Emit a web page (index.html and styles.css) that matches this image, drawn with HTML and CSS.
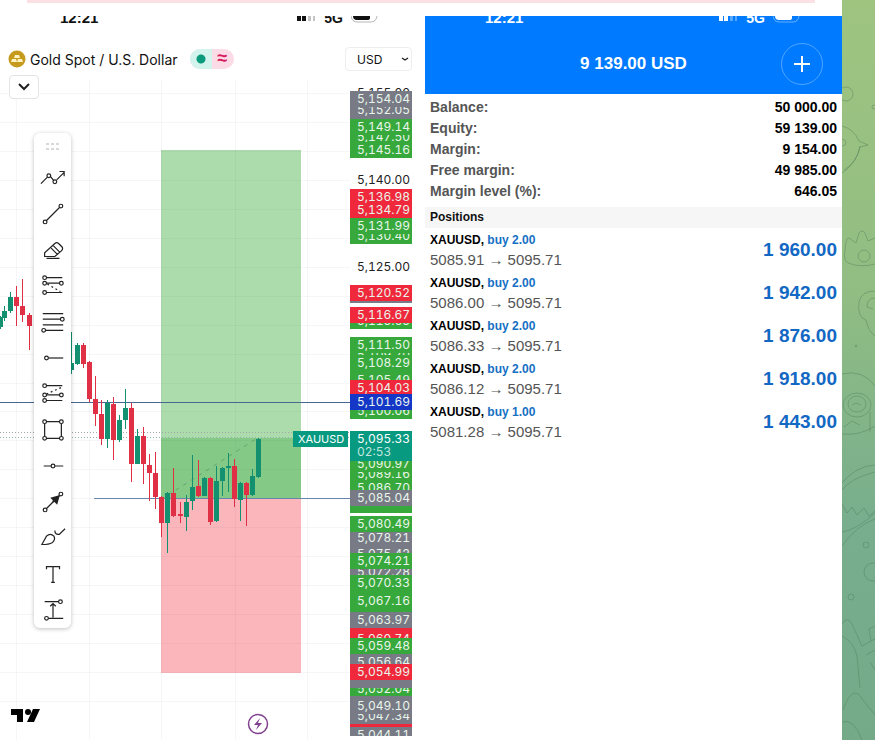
FILE: index.html
```html
<!DOCTYPE html>
<html lang="en">
<head>
    <meta charset="UTF-8">
    <meta name="viewport" content="width=device-width, initial-scale=1.0">
    <title>Gold Spot / U.S. Dollar</title>
    <link rel="stylesheet" href="styles.css">
</head>
<body>
    <div class="page">
        <main class="message">
            <div class="strip"></div>
            <div class="shots">
                <section class="chart">
                    <svg class="plot" id="plot" viewBox="0 16 425 724" preserveAspectRatio="xMinYMin meet"></svg>
                    <div class="status">
                        <span class="time">12:21</span>
                        <svg class="signal" width="22" height="8" viewBox="0 0 22 8"><path d="M1 0h4v5H1zM6 0h4v5H6z" fill="currentColor"/><path d="M12 0h3v5h-3zM17 0h2v5h-2z" fill="currentColor" opacity=".25"/></svg>
                        <span class="network">5G</span>
                        <svg class="battery" width="28" height="8" viewBox="0 0 28 8"><path d="M2 0h17v2q0 2-3 2H6Q2 4 2 0z" fill="currentColor"/><path d="M0 0q1 6 6 6h14q5 0 6-6" fill="none" stroke="currentColor" opacity=".3"/></svg>
                    </div>
                    <header class="symbol">
                        <svg class="gold" width="18" height="18" viewBox="0 0 18 18"><circle cx="9" cy="9" r="8.5" fill="#c59a1d"/><path d="M7 5h4l1 3H6zM4 9h4l1 3H3zM10 9h4l1 3H9z" fill="#fff3c4"/></svg>
                        <h1>Gold Spot / U.S. Dollar</h1>
                        <span class="market"><i class="open"></i><i class="delay">≈</i></span>
                        <select class="currency" aria-label="Currency"><option>USD</option></select>
                    </header>
                    <button class="expand" aria-label="Show indicators"><svg width="12" height="8" viewBox="0 0 12 8"><path d="M1 1l5 5 5-5"/></svg></button>
                    <nav class="tools" aria-label="Drawing tools">
                        <svg class="grip" width="16" height="10" viewBox="0 0 16 10"><path d="M1 2h3M6 2h3M11 2h3M1 7h3M6 7h3M11 7h3"/></svg>
                        <button aria-label="Trend path"><svg viewBox="0 0 28 28"><path d="M1 20l7-7M11 12l4 5M18 16l8-8M21 7h5v5"/><circle cx="9.500" cy="11.500" r="2"/><circle cx="16" cy="18" r="2"/></svg></button>
                        <button aria-label="Trend line"><svg viewBox="0 0 28 28"><path d="M7 21L21 7"/><circle cx="5.500" cy="22.500" r="2"/><circle cx="22.500" cy="5.500" r="2"/></svg></button>
                        <button aria-label="Eraser"><svg viewBox="0 0 28 28"><path d="M5 21v-4L16 7q2-2 4 0l4 4q1 2-1 4l-7 6zM14 9l7 7M12 12l7 7M7 23h14"/></svg></button>
                        <button aria-label="Fib extension"><svg viewBox="0 0 28 28"><path d="M7 5h17M7 11h14M7 21h17"/><path d="M8 12l14 8" stroke-dasharray="2 3"/><circle cx="5" cy="5" r="2"/><circle cx="5" cy="11" r="2"/><circle cx="23" cy="11" r="2"/><circle cx="5" cy="21" r="2"/></svg></button>
                        <button aria-label="Fib retracement"><svg viewBox="0 0 28 28"><path d="M3 5h22M3 11h19M3 17h22M6 23h19"/><circle cx="24" cy="11" r="2"/><circle cx="4" cy="23" r="2"/></svg></button>
                        <button aria-label="Horizontal ray"><svg viewBox="0 0 28 28"><path d="M9 14h16"/><circle cx="7" cy="14" r="2"/></svg></button>
                        <button aria-label="Fib channel"><svg viewBox="0 0 28 28"><path d="M7 5h17M7 15h14M7 21h17"/><path d="M7 14l16-7" stroke-dasharray="2 3"/><circle cx="5" cy="5" r="2"/><circle cx="5" cy="15" r="2"/><circle cx="23" cy="15" r="2"/><circle cx="5" cy="21" r="2"/></svg></button>
                        <button aria-label="Rectangle"><svg viewBox="0 0 28 28"><path d="M7 5h14M7 23h14M5 7v14M23 7v14"/><circle cx="5" cy="5" r="2"/><circle cx="23" cy="5" r="2"/><circle cx="5" cy="23" r="2"/><circle cx="23" cy="23" r="2"/></svg></button>
                        <button aria-label="Horizontal line"><svg viewBox="0 0 28 28"><path d="M4 14h8M16 14h9"/><circle cx="14" cy="14" r="2"/></svg></button>
                        <button aria-label="Arrow"><svg viewBox="0 0 28 28"><path d="M7 21L21 7"/><path class="solid" d="M20 8l-7 2 5 5zM16 11l-2 3"/><circle cx="5.500" cy="22.500" r="2"/><circle cx="22.500" cy="5.500" r="2"/></svg></button>
                        <button aria-label="Brush"><svg viewBox="0 0 28 28"><path d="M2 21l5-9q4-4 8 0 2 4-2 7-3 2-11 2zM16 6q0 5 5 4l6-6"/></svg></button>
                        <button aria-label="Text"><svg viewBox="0 0 28 28"><path d="M7 9V6h14v3M14 6v17M12 23h4"/></svg></button>
                        <button aria-label="Price range"><svg viewBox="0 0 28 28"><path d="M5 5h15M9 23h16M14 22V7M11 10l3-3 3 3"/><circle cx="22" cy="5" r="2"/><circle cx="7" cy="23" r="2"/></svg></button>
                    </nav>
                </section>
                <section class="account">
                    <header class="total">
                        <div class="status">
                            <span class="time">12:21</span>
                            <svg class="signal" width="22" height="8" viewBox="0 0 22 8"><path d="M1 0h4v5H1zM6 0h4v5H6z" fill="currentColor"/><path d="M12 0h3v5h-3zM17 0h2v5h-2z" fill="currentColor" opacity=".35"/></svg>
                            <span class="network">5G</span>
                            <svg class="battery" width="28" height="8" viewBox="0 0 28 8"><path d="M2 0h17v2q0 2-3 2H6Q2 4 2 0z" fill="currentColor"/><path d="M0 0q1 6 6 6h14q5 0 6-6" fill="none" stroke="currentColor" opacity=".4"/></svg>
                        </div>
                        <div class="total-row">
                            <h2>9 139.00 USD</h2>
                            <button class="add" aria-label="New order"><svg width="18" height="18" viewBox="0 0 18 18"><path d="M9 1v16M1 9h16"/></svg></button>
                        </div>
                    </header>
                    <dl class="summary">
                        <div><dt>Balance:</dt><dd>50 000.00</dd></div>
                        <div><dt>Equity:</dt><dd>59 139.00</dd></div>
                        <div><dt>Margin:</dt><dd>9 154.00</dd></div>
                        <div><dt>Free margin:</dt><dd>49 985.00</dd></div>
                        <div><dt>Margin level (%):</dt><dd>646.05</dd></div>
                    </dl>
                    <h3>Positions</h3>
                    <ul class="positions">
                        <li><div><p class="deal">XAUUSD, <span>buy 2.00</span></p><p class="move">5085.91 → 5095.71</p></div><strong>1 960.00</strong></li>
                        <li><div><p class="deal">XAUUSD, <span>buy 2.00</span></p><p class="move">5086.00 → 5095.71</p></div><strong>1 942.00</strong></li>
                        <li><div><p class="deal">XAUUSD, <span>buy 2.00</span></p><p class="move">5086.33 → 5095.71</p></div><strong>1 876.00</strong></li>
                        <li><div><p class="deal">XAUUSD, <span>buy 2.00</span></p><p class="move">5086.12 → 5095.71</p></div><strong>1 918.00</strong></li>
                        <li><div><p class="deal">XAUUSD, <span>buy 1.00</span></p><p class="move">5081.28 → 5095.71</p></div><strong>1 443.00</strong></li>
                    </ul>
                </section>
            </div>
        </main>
        <aside class="wallpaper">
            <svg width="33" height="740" viewBox="0 0 33 740">
                <circle cx="4" cy="94" r="7"/><circle cx="32" cy="107" r="2"/>
                <path d="M0 126q12 3 17 15l9 4-8 2q-4 17-18 26M0 139q5 1 3 6l-3 1M18 146q-2 15-16 24"/>
                <path d="M3 250q1-13 4-12l7 5 3-10q3-4 6 0l3 8 7-3M3 250q-2 10 3 13 13 5 27 1"/><circle cx="22" cy="256" r="6"/>
                <path d="M33 291q-14 0-16 11-2 15 7 18 2 11 9 16M33 298q-8 0-8 9l6 2"/><circle cx="14" cy="346" r="1"/>
                <path d="M0 374q21-5 33 12M0 434q18 2 33-8"/><ellipse cx="15" cy="405" rx="14" ry="12"/><ellipse cx="15" cy="404" rx="9" ry="8"/><path d="M10 405l4-2 5 2M2 427l8-6 8 4M28 412v20"/>
                <path d="M0 483q14-17 33-18M0 490q9-12 33-18M0 504l5 9 5-6 5 8 7-7 5 8 6-5M0 546q14-20 33-27M0 532q14-2 33-19"/>
                <circle cx="24" cy="545" r="3"/><circle cx="31" cy="572" r="9"/><circle cx="9" cy="597" r="3"/>
                <path d="M0 624q5-9 10 0l10 22 13-7M0 636q12 6 15 20l3 32M33 626l-6 3 2 12M24 655l9-5M28 662l5 8M1 710q10-28 20-10l12 15M0 722q12-4 20 18"/>
            </svg>
        </aside>
    </div>
    <script src="chart.js"></script>
</body>
</html>
```
FILE: styles.css
```css
* {
    box-sizing: border-box;
}
body {
    font-family: "Liberation Sans", Arial, sans-serif;
    margin: 0;
    background: #fff;
    color: #111;
}
h1, h2, h3, p, dl, dd, ul {
    margin: 0;
    padding: 0;
}
button {
    padding: 0;
    border: none;
    background: none;
    cursor: pointer;
}
.page {
    display: flex;
    min-height: 100vh;
}
.message {
    flex: 1;
    min-width: 0;
}
.strip {
    height: 3px;
    margin: 0 27px 13px;
    background: #fbe1e4;
}
.shots {
    display: flex;
}
.chart {
    position: relative;
    flex: 425;
    min-width: 0;
}
.plot {
    position: absolute;
    top: 0;
    left: 0;
    width: 100%;
}
.plot text {
    font-family: Inter, sans-serif;
    font-size: 12px;
    font-variant-numeric: tabular-nums;
}
.plot .ticker {
    font-size: 11px;
}

/* only the lower part of the phone status bar is visible */
.status {
    display: flex;
    align-items: flex-end;
    height: 8px;
    padding: 0 46px 0 60px;
    overflow: hidden;
    font-size: 15px;
    font-weight: bold;
    line-height: 12px;
}
.time {
    flex: 1;
}
.network {
    margin: 0 8px 0 6px;
    font-size: 14px;
}
.status svg {
    flex: none;
}

.symbol {
    position: relative;
    display: flex;
    align-items: center;
    height: 24px;
    margin-top: 23px;
    padding: 0 13px 0 8px;
}
.symbol h1 {
    margin: 0 12px 0 4px;
    font-family: Inter, sans-serif;
    font-size: 14px;
    font-weight: normal;
    white-space: nowrap;
}
.market {
    display: flex;
    width: 44px;
    height: 20px;
    border-radius: 10px;
    overflow: hidden;
    background: #fbdbe6;
}
.market i {
    flex: 1;
    font-style: normal;
}
.open {
    background: radial-gradient(circle, #0b9a7b 4px, #d3f3ed 5px);
}
.delay {
    color: #d81b60;
    font-size: 18px;
    font-weight: bold;
    line-height: 19px;
    text-align: center;
}
.currency {
    width: 67px;
    height: 24px;
    margin-left: auto;
    padding: 0 11px;
    appearance: none;
    border: 1px solid #eee;
    border-radius: 4px;
    background: #fff url("data:image/svg+xml,%3Csvg xmlns='http://www.w3.org/2000/svg' width='8' height='5'%3E%3Cpath d='M1 1l3 2 3-2' fill='none' stroke='%23222' stroke-width='1.4'/%3E%3C/svg%3E") no-repeat right 2px center;
    color: #111;
    font-family: Inter, sans-serif;
    font-size: 12px;
}
.expand {
    position: relative;
    display: flex;
    align-items: center;
    justify-content: center;
    width: 30px;
    height: 24px;
    margin: 4px 0 0 9px;
    border: 1px solid #e4e4e4;
    border-radius: 4px;
    background: #fff;
}
.expand path {
    fill: none;
    stroke: #222;
    stroke-width: 2;
}
.tools {
    position: relative;
    display: flex;
    flex-direction: column;
    align-items: center;
    width: 37px;
    margin: 34px 0 0 34px;
    padding: 9px 0 0;
    border-radius: 6px;
    background: #fff;
    box-shadow: 0 1px 4px rgba(0, 0, 0, 0.25);
}
.tools button {
    display: flex;
    align-items: center;
    justify-content: center;
    width: 36px;
    height: 36px;
}
.tools button svg {
    width: 26px;
    height: 26px;
}
.tools path, .tools circle {
    fill: none;
    stroke: #222;
    stroke-width: 1.3;
}
.tools .solid {
    fill: #222;
    stroke-width: 2;
}
.tools .grip {
    margin-bottom: 8px;
}
.tools .grip path {
    stroke: #ccc;
}

.account {
    flex: 417;
    min-width: 0;
}
.total {
    height: 78px;
    background: #007aff;
    color: #fff;
}
.total .status {
    padding-right: 41px;
}
.total-row {
    display: grid;
    grid-template-columns: 42px 1fr 42px;
    align-items: center;
    padding: 19px 19px 0;
}
.total h2 {
    grid-column: 2;
    font-size: 17px;
    text-align: center;
}
.add {
    display: flex;
    align-items: center;
    justify-content: center;
    width: 42px;
    height: 42px;
    border: 1px solid #4fa6ff;
    border-radius: 50%;
}
.add path {
    stroke: #fff;
    stroke-width: 2;
}
.summary {
    padding: 3px 5px 5px;
    font-size: 14px;
    font-weight: bold;
    line-height: 21px;
}
.summary div {
    display: flex;
    justify-content: space-between;
}
.summary dt {
    color: #555;
}
.summary dd {
    color: #000;
}
.account h3 {
    padding: 0 5px;
    background: #f6f6f7;
    font-size: 12px;
    line-height: 21px;
}
.positions {
    padding: 2px 5px;
    list-style: none;
}
.positions li {
    display: flex;
    align-items: center;
    justify-content: space-between;
    padding-bottom: 3px;
}
.deal {
    color: #000;
    font-size: 12px;
    font-weight: bold;
    line-height: 20px;
}
.deal span {
    color: #1670c4;
}
.move {
    color: #555;
    font-size: 15px;
    line-height: 20px;
}
.positions strong {
    color: #1268c3;
    font-size: 19px;
}

.wallpaper {
    flex: none;
    width: 33px;
    overflow: hidden;
    background: linear-gradient(#9fc480, #91bd83 40%, #78ae8d 70%, #74aa88);
}
.wallpaper svg {
    display: block;
    fill: none;
    stroke: #537f5c;
    stroke-opacity: 0.45;
}
```
FILE: chart.js
```js
const plot = document.getElementById('plot');
const GREEN = '#37a93c', RED = '#f0283c', GRAY = '#787b86', BLUE = '#1437c8', TEAL = '#089981';

function add(tag, attrs, text) {
    const el = document.createElementNS('http://www.w3.org/2000/svg', tag);
    for (const key in attrs) el.setAttribute(key, attrs[key]);
    if (text) el.textContent = text;
    plot.appendChild(el);
}

function priceY(price) {
    return Math.round(180 + (5140 - price) * 5.786);
}

function rect(x, y, width, height, fill) {
    add('rect', { x, y, width, height, fill });
}

function line(x1, y1, x2, y2, stroke, dash) {
    add('line', { x1, y1, x2, y2, stroke, 'stroke-dasharray': dash || 'none' });
}

// trade zones
rect(161, 150, 140, 348, '#addcac');
rect(161, 438, 140, 60, '#84ca86');
rect(161, 498, 140, 175, '#fbb6bb');

// grid
for (const x of [16, 89, 161, 235, 307]) line(x + 0.5, 80, x + 0.5, 740, 'rgba(60,70,90,.05)');
for (let price = 5155; price > 5045; price -= 5) {
    line(0, priceY(price) + 0.5, 350, priceY(price) + 0.5, 'rgba(60,70,90,.05)');
}

line(0, 402.5, 350, 402.5, '#49688f');
line(94, 498.5, 350, 498.5, '#6885aa');
line(0, 432.5, 350, 432.5, '#a5a5a5', '1 2');
line(0, 437.5, 350, 437.5, '#8fb5ac', '1 2');
line(168, 495, 256, 439, '#65a56d', '4 5');

// x, high, low, body top, body bottom, up
const candles = [
    [0, 316, 329, 317, 327, 1], [4, 306, 321, 311, 318, 1], [10, 292, 313, 297, 311, 1],
    [16, 286, 326, 297, 306, 0], [22, 279, 322, 306, 315, 0], [29, 313, 350, 315, 326, 0],
    [71, 332, 374, 363, 370, 1], [77, 343, 365, 345, 364, 1], [83, 343, 368, 345, 364, 0],
    [89, 361, 402, 362, 399, 0], [95, 376, 426, 399, 414, 0], [101, 400, 445, 414, 439, 0],
    [107, 400, 448, 403, 439, 1], [113, 397, 460, 404, 440, 0], [119, 415, 442, 420, 440, 1],
    [125, 389, 429, 408, 420, 1], [131, 403, 482, 408, 464, 0], [137, 429, 464, 436, 464, 1],
    [143, 427, 484, 436, 464, 0], [149, 454, 501, 465, 473, 0], [155, 452, 509, 473, 497, 0],
    [161, 496, 537, 497, 523, 0], [167, 492, 553, 493, 523, 1], [173, 468, 517, 493, 516, 0],
    [180, 502, 523, 514, 516, 0], [186, 495, 531, 502, 517, 1], [192, 455, 510, 487, 501, 1],
    [198, 460, 497, 486, 496, 0], [204, 477, 496, 478, 496, 1], [210, 477, 525, 478, 522, 0],
    [216, 466, 522, 481, 521, 1], [222, 467, 496, 468, 481, 1], [228, 453, 492, 466, 468, 1],
    [234, 459, 507, 466, 499, 0], [240, 482, 521, 483, 500, 1], [246, 482, 526, 483, 495, 0],
    [252, 469, 496, 476, 495, 1], [258, 438, 478, 439, 477, 1]
];
for (const [x, high, low, top, bottom, up] of candles) {
    const color = up ? '#12906f' : '#df3046';
    line(x + 0.5, high, x + 0.5, low, color);
    rect(x - 2, top, 5, bottom - top, color);
}

// price scale: later labels cover earlier ones, a label without text is fully covered
const labels = [
    [5155, '', '5,155.00'], [5140, '', '5,140.00'], [5125, '', '5,125.00'],
    [5150.9, GRAY], [5152.05, GRAY, '5,152.05'], [5154.04, GRAY, '5,154.04'],
    [5147.5, GREEN, '5,147.50'], [5145.16, GREEN, '5,145.16'], [5149.14, GREEN, '5,149.14'],
    [5134.79, RED, '5,134.79'], [5136.98, RED, '5,136.98'],
    [5130.4, GREEN, '5,130.40'], [5131.99, GREEN, '5,131.99'],
    [5120.1, GRAY], [5120.52, RED, '5,120.52'],
    [5115.65, GREEN, '5,115.65'], [5116.67, RED, '5,116.67'],
    [5109.7, GREEN, '5,109.70'], [5111.5, GREEN, '5,111.50'],
    [5106.4, GREEN], [5105.49, GREEN, '5,105.49'], [5108.29, GREEN, '5,108.29'],
    [5104.03, RED, '5,104.03'], [5100.06, GREEN, '5,100.06'], [5101.69, BLUE, '5,101.69'],
    [5086.7, GREEN, '5,086.70'], [5089.16, GREEN, '5,089.16'], [5090.97, GREEN, '5,090.97'],
    [5083.9, GREEN], [5085.04, GRAY, '5,085.04'],
    [5075.42, GRAY, '5,075.42'], [5078.21, GRAY, '5,078.21'], [5080.49, GREEN, '5,080.49'],
    [5072.28, GRAY, '5,072.28'], [5074.21, GREEN, '5,074.21'],
    [5068.8, GREEN], [5070.33, GREEN, '5,070.33'],
    [5066.2, GREEN], [5067.16, GREEN, '5,067.16'],
    [5062.2, RED], [5063.97, GRAY, '5,063.97'],
    [5060.74, RED, '5,060.74'], [5059.48, GREEN, '5,059.48'],
    [5056.64, GRAY, '5,056.64'], [5052.04, GREEN, '5,052.04'], [5053.5, GRAY], [5054.99, RED, '5,054.99'],
    [5049.4, GRAY], [5045.7, RED], [5044.11, GRAY, '5,044.11'],
    [5047.34, GRAY, '5,047.34'], [5049.1, GRAY, '5,049.10']
];
for (const [price, color, text] of labels) {
    const y = priceY(price);
    if (color) rect(350, y - 8, 62, 16, color);
    if (text) add('text', { x: 357, y: y + 4, fill: color ? '#e9f5ea' : '#222' }, text);
}
rect(350, 736, 62, 4, '#fff');

// last price
rect(293, 431, 55, 16, TEAL);
add('text', { x: 298, y: 443, fill: '#fff', class: 'ticker' }, 'XAUUSD');
rect(350, 431, 62, 30, TEAL);
add('text', { x: 357, y: 443, fill: '#fff' }, '5,095.33');
add('text', { x: 357, y: 456, fill: '#bfe6df' }, '02:53');

// logo and session event
add('path', { d: 'M11 709h12v13h-6v-7h-6zM33 709h7l-6 13h-7z', fill: '#000' });
add('circle', { cx: 28, cy: 712, r: 3, fill: '#000' });
add('circle', { cx: 258, cy: 724, r: 9.5, fill: '#fff', stroke: '#82418f', 'stroke-width': 1.5 });
add('path', { d: 'M260 718l-6 7h4l-2 5 6-7h-4z', fill: '#82418f' });
```
